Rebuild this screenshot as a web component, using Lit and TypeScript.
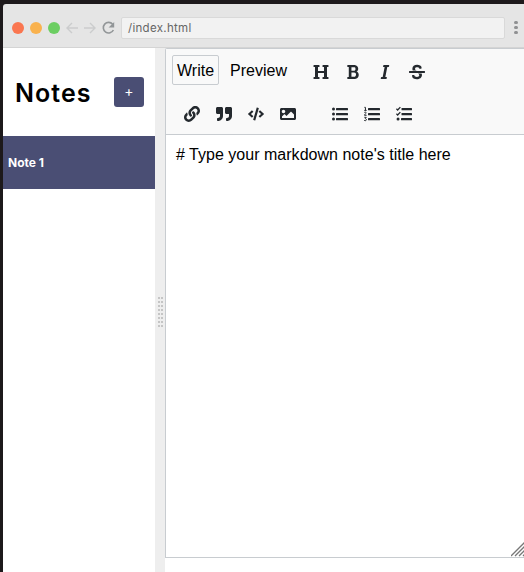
import { LitElement, html, css, svg } from "lit";
import { customElement } from "lit/decorators.js";

const icon = (path: string, width = 512) => html`
  <svg class="icon" viewBox="0 0 ${width} 512"><path d=${path}></path></svg>`;

const heading = "M448 96v320h32a16 16 0 0 1 16 16v32a16 16 0 0 1-16 16H320a16 16 0 0 1-16-16v-32a16 16 0 0 1 16-16h32V288H160v128h32a16 16 0 0 1 16 16v32a16 16 0 0 1-16 16H32a16 16 0 0 1-16-16v-32a16 16 0 0 1 16-16h32V96H32a16 16 0 0 1-16-16V48a16 16 0 0 1 16-16h160a16 16 0 0 1 16 16v32a16 16 0 0 1-16 16h-32v128h192V96h-32a16 16 0 0 1-16-16V48a16 16 0 0 1 16-16h160a16 16 0 0 1 16 16v32a16 16 0 0 1-16 16z";
const bold = "M304.793 243.891c33.639-18.537 53.657-54.16 53.657-95.693 0-48.236-26.25-87.626-68.626-104.179C265.138 34.01 240.849 32 209.661 32H24c-8.837 0-16 7.163-16 16v33.049c0 8.837 7.163 16 16 16h33.113v318.53H24c-8.837 0-16 7.163-16 16V464c0 8.837 7.163 16 16 16h195.69c24.203 0 44.834-1.289 66.866-7.584C337.52 457.193 376 410.647 376 350.014c0-52.168-26.573-91.684-71.207-106.123zM142.217 100.809h67.444c16.294 0 27.536 2.019 37.525 6.717 15.828 8.479 24.906 26.502 24.906 49.446 0 35.029-20.32 56.79-53.029 56.79h-76.846V100.809zm112.642 305.475c-10.14 4.056-22.677 4.907-31.409 4.907h-81.233V275.943h84.367c39.645 0 63.057 25.38 63.057 63.057.001 28.425-13.66 52.483-34.782 67.284z";
const italic = "M204.758 416h-33.849l62.092-320h40.725a16 16 0 0 0 15.704-12.937l6.242-32C297.599 41.184 290.034 32 279.968 32H120.235a16 16 0 0 0-15.704 12.937l-6.242 32C96.362 86.816 103.927 96 113.993 96h33.846l-62.09 320H46.278a16 16 0 0 0-15.704 12.935l-6.245 32C22.402 470.815 29.967 480 40.034 480h158.479a16 16 0 0 0 15.704-12.935l6.245-32c1.927-9.88-5.638-19.065-15.704-19.065z";
const strike = "M496 288H16c-8.837 0-16-7.163-16-16v-32c0-8.837 7.163-16 16-16h480c8.837 0 16 7.163 16 16v32c0 8.837-7.163 16-16 16zm-214.666 16c27.258 12.937 46.524 28.683 46.524 56.243 0 33.108-28.977 53.676-75.621 53.676-32.325 0-76.874-12.08-76.874-44.271V368c0-8.837-7.164-16-16-16H113.75c-8.836 0-16 7.163-16 16v19.204c0 66.845 77.717 101.82 154.487 101.82 88.578 0 162.013-45.438 162.013-134.424 0-19.815-3.618-36.417-10.143-50.6H281.334zm-30.952-96c-32.422-13.505-56.836-28.946-56.836-59.683 0-33.92 30.901-47.406 64.962-47.406 42.647 0 64.962 16.593 64.962 32.985V136c0 8.837 7.163 16 16 16h45.613c8.837 0 16-7.163 16-16v-30.318c0-52.438-71.725-79.875-142.575-79.875-85.203 0-150.726 40.972-150.726 125.646 0 22.71 4.665 41.347 12.773 56.547h129.827z";
const link = "M326.612 185.391c59.747 59.809 58.927 155.698.36 214.59-.11.12-.24.25-.36.37l-67.2 67.2c-59.27 59.27-155.699 59.262-214.96 0-59.27-59.26-59.27-155.7 0-214.96l37.106-37.106c9.84-9.84 26.786-3.3 27.294 10.606.648 17.722 3.826 35.527 9.69 52.721 1.986 5.822.567 12.262-3.783 16.612l-13.087 13.087c-28.026 28.026-28.905 73.66-1.155 101.96 28.024 28.579 74.086 28.749 102.325.51l67.2-67.19c28.191-28.191 28.073-73.757 0-101.83-3.701-3.694-7.429-6.564-10.341-8.569a16.037 16.037 0 0 1-6.947-12.606c-.396-10.567 3.348-21.456 11.698-29.806l21.054-21.055c5.521-5.521 14.182-6.199 20.584-1.731a152.482 152.482 0 0 1 20.522 17.197zM467.547 44.449c-59.261-59.262-155.69-59.27-214.96 0l-67.2 67.2c-.12.12-.25.25-.36.37-58.566 58.892-59.387 154.781.36 214.59a152.454 152.454 0 0 0 20.521 17.196c6.402 4.468 15.064 3.789 20.584-1.731l21.054-21.055c8.35-8.35 12.094-19.239 11.698-29.806a16.037 16.037 0 0 0-6.947-12.606c-2.912-2.005-6.64-4.875-10.341-8.569-28.073-28.073-28.191-73.639 0-101.83l67.2-67.19c28.239-28.239 74.3-28.069 102.325.51 27.75 28.3 26.872 73.934-1.155 101.96l-13.087 13.087c-4.35 4.35-5.769 10.79-3.783 16.612 5.864 17.194 9.042 34.999 9.69 52.721.509 13.906 17.454 20.446 27.294 10.606l37.106-37.106c59.271-59.259 59.271-155.699.001-214.959z";
const quote = "M464 32H336c-26.5 0-48 21.5-48 48v128c0 26.5 21.5 48 48 48h80v64c0 35.3-28.7 64-64 64h-8c-13.3 0-24 10.7-24 24v48c0 13.3 10.7 24 24 24h8c88.4 0 160-71.6 160-160V80c0-26.5-21.5-48-48-48zm-288 0H48C21.5 32 0 53.5 0 80v128c0 26.5 21.5 48 48 48h80v64c0 35.3-28.7 64-64 64h-8c-13.3 0-24 10.7-24 24v48c0 13.3 10.7 24 24 24h8c88.4 0 160-71.6 160-160V80c0-26.5-21.5-48-48-48z";
const code = "M278.9 511.5l-61-17.7c-6.4-1.8-10-8.5-8.2-14.9L346.2 8.7c1.8-6.4 8.5-10 14.9-8.2l61 17.7c6.4 1.8 10 8.5 8.2 14.9L293.8 503.3c-1.9 6.4-8.5 10.1-14.9 8.2zm-114-112.2l43.5-46.4c4.6-4.9 4.3-12.7-.8-17.2L117 256l90.6-79.7c5.1-4.5 5.5-12.3.8-17.2l-43.5-46.4c-4.5-4.8-12.1-5.1-17-.5L3.8 247.2c-5.1 4.7-5.1 12.8 0 17.5l144.1 135.1c4.9 4.6 12.5 4.4 17-.5zm327.2.6l144.1-135.1c5.1-4.7 5.1-12.8 0-17.5L492.1 112.1c-4.8-4.5-12.4-4.3-17 .5L431.6 159c-4.6 4.9-4.3 12.7.8 17.2L523 256l-90.6 79.7c-5.1 4.5-5.5 12.3-.8 17.2l43.5 46.4c4.5 4.9 12.1 5.1 17 .6z";
const image = "M464 448H48c-26.51 0-48-21.49-48-48V112c0-26.51 21.49-48 48-48h416c26.51 0 48 21.49 48 48v288c0 26.51-21.49 48-48 48zM112 120c-30.928 0-56 25.072-56 56s25.072 56 56 56 56-25.072 56-56-25.072-56-56-56zM64 384h384V272l-87.515-87.515c-4.686-4.686-12.284-4.686-16.971 0L208 320l-55.515-55.515c-4.686-4.686-12.284-4.686-16.971 0L64 336v48z";

const bars = [60, 220, 380].map(
  (y) => svg`<rect x="128" y=${y} width="384" height="72" rx="16"></rect>`
);

@customElement("app-root")
export class AppRoot extends LitElement {
  static styles = css`
    :host {
      display: flex;
      flex-direction: column;
      box-sizing: border-box;
      width: 100%;
      height: 100vh;
      padding: 4px 0 0 3px;
      background: #1d191b;
      overflow: hidden;
      font-family: "Liberation Sans", Arial, sans-serif;
      color: #000;
    }
    .chrome {
      flex: none;
      display: flex;
      align-items: center;
      box-sizing: border-box;
      height: 44px;
      padding: 4px 3px 0 9px;
      background: #e5e5e5;
      border-bottom: 1px solid #d4d4d4;
      border-top-left-radius: 3px;
    }
    .lights { display: flex; gap: 6px; }
    .light { width: 12px; height: 12px; border-radius: 50%; }
    .red { background: #fa7650; }
    .amber { background: #f9b24e; }
    .green { background: #6cce62; }
    .nav { display: block; width: 58px; height: 18px; margin: 0 2px 0 1px; fill: none; }
    .address {
      flex: 1;
      box-sizing: border-box;
      height: 22px;
      padding-left: 6px;
      background: #f2f2f2;
      border: 1px solid #d9d9d9;
      border-radius: 2px;
      font: 11.5px/20px Inter, sans-serif;
      letter-spacing: 0.3px;
      color: #666;
    }
    .more { display: flex; flex-direction: column; gap: 1.5px; margin: 0 3.5px 0 9.5px; }
    .more span { width: 3.4px; height: 3.4px; border-radius: 50%; background: #8f9092; }
    .content { flex: 1; display: flex; min-height: 0; background: #fff; }
    .sidebar { flex: none; width: 152px; }
    .header {
      display: flex;
      align-items: center;
      justify-content: space-between;
      height: 88px;
      padding: 0 11px 0 12px;
    }
    h1 { margin: 2px 0 0; font: 600 25px/30px Inter, sans-serif; letter-spacing: 1.05px; }
    .add {
      width: 30px;
      height: 30px;
      padding: 0 0 2px;
      border: 0;
      border-radius: 3px;
      background: #4a4e74;
      color: #fff;
      font: 14px/28px Inter, sans-serif;
    }
    .note {
      height: 53px;
      padding-left: 5px;
      background: #4a4e74;
      color: #fff;
      font: 700 12px/53px Inter, sans-serif;
    }
    .gutter {
      flex: none;
      width: 10px;
      display: flex;
      align-items: center;
      justify-content: center;
      background: #eee;
    }
    .grip { display: grid; grid-template-columns: 2px 2px; gap: 2px 1px; padding-top: 3px; }
    .grip span { width: 2px; height: 2px; background: #c5c5c5; }
    .editor {
      flex: 1;
      display: flex;
      flex-direction: column;
      min-width: 0;
      box-sizing: border-box;
      height: 510px;
      border: solid #c8ccd0;
      border-width: 1px 0 1px 1px;
      border-top-left-radius: 2px;
    }
    .toolbar {
      flex: none;
      box-sizing: border-box;
      height: 86px;
      padding: 6px 0 0 6px;
      background: #f9f9f9;
      border-bottom: 1px solid #c8ccd0;
    }
    .row { display: flex; align-items: flex-start; height: 30px; }
    .row + .row { padding: 13px 0 0 4px; }
    .tab {
      box-sizing: border-box;
      height: 30px;
      margin: 0;
      padding: 2px 4px 0;
      border: 1px solid transparent;
      border-radius: 2px;
      background: none;
      color: #000;
      font: 16px/26px "Liberation Sans", Arial, sans-serif;
    }
    .tab + .tab { margin-left: 6px; }
    .selected { border-color: #c8ccd0; }
    .tab + .group { margin: 1px 0 0 13px; }
    .group { display: flex; }
    .group + .group { margin-left: 20px; }
    .tool { display: grid; place-items: center; width: 32px; height: 32px; }
    .icon { display: block; width: 16px; height: 16px; fill: #24292e; }
    .line { fill: none; stroke: #24292e; }
    .text {
      flex: 1;
      position: relative;
      padding: 10px;
      font-size: 16px;
      line-height: 20px;
      letter-spacing: 0.02px;
    }
    .resize { position: absolute; right: -1px; bottom: 0; width: 14px; height: 15px; }
  `;

  render() {
    return html`
      <div class="chrome">
        <div class="lights">
          <span class="light red"></span><span class="light amber"></span><span class="light green"></span>
        </div>
        <svg class="nav" viewBox="0 0 58 18">
          <path d="M17 9H6M11 4L6 9l5 5M23 9h11M29 4l5 5-5 5" stroke="#cbcccd" stroke-width="1.4"></path>
          <path d="M51.7 5.3A5.3 5.3 0 1 0 52.4 11" stroke="#929698" stroke-width="1.6"></path>
          <path d="M53.2 3v5.6h-5.6z" fill="#929698"></path>
        </svg>
        <div class="address">/index.html</div>
        <div class="more"><span></span><span></span><span></span></div>
      </div>
      <div class="content">
        <div class="sidebar">
          <div class="header"><h1>Notes</h1><button class="add">+</button></div>
          <div class="note">Note 1</div>
        </div>
        <div class="gutter">
          <div class="grip">${Array.from({ length: 16 }, () => html`<span></span>`)}</div>
        </div>
        <div class="editor">
          <div class="toolbar">
            <div class="row">
              <button class="tab selected">Write</button>
              <button class="tab">Preview</button>
              <div class="group">
                <span class="tool">${icon(heading)}</span>
                <span class="tool">${icon(bold, 384)}</span>
                <span class="tool">${icon(italic, 320)}</span>
                <span class="tool">${icon(strike)}</span>
              </div>
            </div>
            <div class="row">
              <div class="group">
                <span class="tool">${icon(link)}</span>
                <span class="tool">${icon(quote)}</span>
                <span class="tool">${icon(code, 640)}</span>
                <span class="tool">${icon(image)}</span>
              </div>
              <div class="group">
                <span class="tool">
                  <svg class="icon" viewBox="0 0 512 512">
                    ${bars}
                    <circle cx="48" cy="96" r="48"></circle>
                    <circle cx="48" cy="256" r="48"></circle>
                    <circle cx="48" cy="416" r="48"></circle>
                  </svg>
                </span>
                <span class="tool">
                  <svg class="icon" viewBox="0 0 512 512">
                    ${bars}
                    <path class="line" stroke-width="32" d="M12 43h34v92M8 141h76M10 207c25-20 60-12 60 12 0 25-54 46-56 78h69M10 362h62l-32 40c48-4 50 68 0 68-15 0-26-4-34-10"></path>
                  </svg>
                </span>
                <span class="tool">
                  <svg class="icon" viewBox="0 0 512 512">
                    <rect x="176" y="60" width="336" height="72" rx="16"></rect>
                    <rect x="176" y="220" width="336" height="72" rx="16"></rect>
                    <rect x="160" y="380" width="352" height="72" rx="16"></rect>
                    <path class="line" stroke-width="42" d="M12 90l41 38 86-91M12 250l41 38 86-91"></path>
                    <circle cx="65" cy="416" r="48"></circle>
                  </svg>
                </span>
              </div>
            </div>
          </div>
          <div class="text">
            # Type your markdown note's title here
            <svg class="resize" viewBox="0 0 14 15">
              <path d="M0 14L14 0M4 14L14 4M8 14l6-6M12 14l2-2" fill="none" stroke="#777" stroke-width="1.3"></path>
            </svg>
          </div>
        </div>
      </div>
    `;
  }
}
